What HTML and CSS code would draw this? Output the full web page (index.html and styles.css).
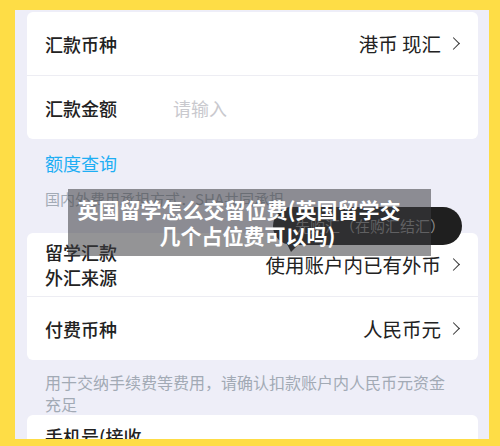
FILE: index.html
```html
<!DOCTYPE html>
<html lang="zh-CN">
<head>
    <meta charset="UTF-8">
    <meta name="viewport" content="width=device-width, initial-scale=1.0">
    <title>英国留学怎么交留位费</title>
    <link rel="stylesheet" href="styles.css">
</head>
<body>
    <div class="frame">
        <div class="page">

            <!-- Currency and amount -->
            <div class="card">
                <div class="row">
                    <span class="label">汇款币种</span>
                    <span class="value">港币 现汇 <i class="chevron"></i></span>
                </div>
                <div class="row">
                    <span class="label">汇款金额</span>
                    <span class="placeholder">请输入</span>
                </div>
            </div>

            <div class="section">
                <div class="link">额度查询</div>
                <div class="hint">国内外费用承担方式：SHA共同承担</div>
            </div>

            <!-- Source of funds -->
            <div class="card">
                <div class="row">
                    <span class="label two-line">留学汇款<br>外汇来源</span>
                    <span class="value">使用账户内已有外币 <i class="chevron"></i></span>
                </div>
                <div class="row">
                    <span class="label">付费币种</span>
                    <span class="value">人民币元 <i class="chevron"></i></span>
                </div>
            </div>

            <div class="note">用于交纳手续费等费用，请确认扣款账户内人民币元资金<br>充足</div>

            <div class="card">
                <div class="row row-top">
                    <span class="label">手机号(接收</span>
                </div>
            </div>

            <!-- Tooltip bubble -->
            <div class="bubble">先购汇（在购汇结汇）</div>

            <!-- Title caption -->
            <div class="caption">
                <div class="caption-line first">英国留学怎么交留位费(英国留学交</div>
                <div class="caption-line second">几个占位费可以吗)</div>
            </div>
        </div>
    </div>
</body>
</html>
```

FILE: styles.css
```css
/* Basic styling */
body {
    margin: 0;
    background: #fedd46;
    font-family: "Noto Sans CJK SC", "Noto Sans", sans-serif;
}

.frame {
    width: 500px;
    height: 446px;
    padding: 10px 11px 0 15px;
    box-sizing: border-box;
}

.page {
    position: relative;
    height: 427px;
    overflow: hidden;
    background: #eeeef8;
    padding: 2px 11px 0 12px;
}

/* Cards and rows */
.card {
    background: #ffffff;
    border-radius: 6px;
    overflow: hidden;
}

.row {
    height: 63px;
    padding: 0 18px;
    display: flex;
    align-items: center;
    justify-content: space-between;
}

.row + .row {
    border-top: 1px solid #ededf3;
}

.row-top {
    align-items: flex-start;
    padding-top: 8px;
}

.label {
    font-size: 18px;
    font-weight: 500;
    color: #222;
}

.two-line {
    line-height: 25px;
}

.value {
    font-size: 19.5px;
    color: #222;
    display: flex;
    align-items: center;
}

.chevron {
    display: inline-block;
    width: 8px;
    height: 8px;
    border-top: 1.6px solid #333;
    border-right: 1.6px solid #333;
    transform: rotate(45deg);
    margin: 0 2px 0 8px;
}

.placeholder {
    flex: 1;
    margin-left: 56px;
    font-size: 18px;
    color: #c9c9ce;
}

/* Text between cards */
.section {
    padding: 12px 18px 23px;
}

.link {
    font-size: 18px;
    line-height: 24px;
    color: #1eaef4;
}

.hint {
    margin-top: 13px;
    font-size: 15px;
    line-height: 22px;
    color: #a2aab5;
}

.note {
    padding: 11px 18px 0;
    height: 44px;
    font-size: 16px;
    line-height: 22px;
    color: #a2aab5;
}

/* Overlays */
.bubble {
    position: absolute;
    left: 258px;
    top: 197px;
    width: 189px;
    height: 38px;
    box-sizing: border-box;
    padding-left: 22px;
    border-radius: 19px;
    background: #1f1f1f;
    color: #8c8c8c;
    font-size: 15px;
    line-height: 38px;
}

.bubble::after {
    content: "";
    position: absolute;
    left: 14px;
    bottom: -7px;
    border-left: 4px solid transparent;
    border-right: 8px solid transparent;
    border-top: 8px solid #1f1f1f;
}

.caption {
    position: absolute;
    left: 53px;
    top: 179px;
    width: 363px;
    height: 67px;
    box-sizing: border-box;
    padding-top: 7px;
    background: rgba(60, 60, 64, 0.55);
    color: #fff;
    font-size: 21px;
    font-weight: 700;
    line-height: 26px;
    text-align: center;
}

.caption-line.first {
    padding-right: 21px;
}

.caption-line.second {
    padding-right: 4px;
}
```
